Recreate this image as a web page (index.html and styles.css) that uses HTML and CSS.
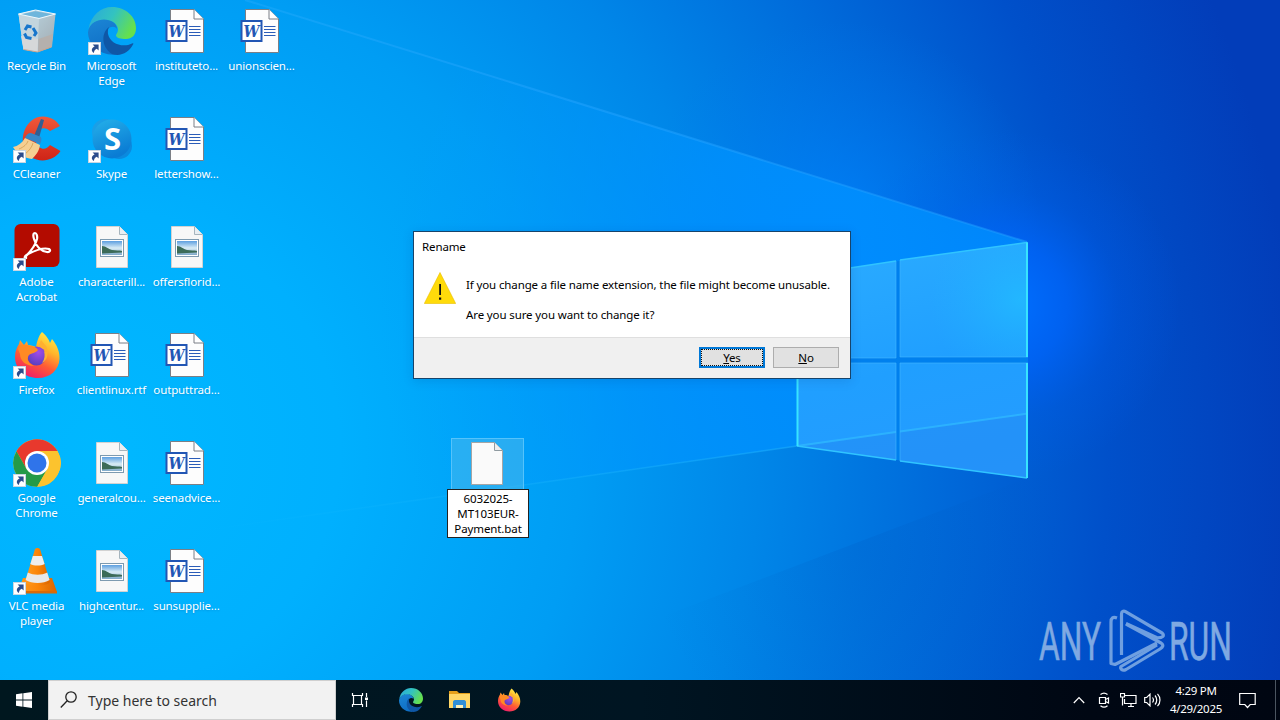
FILE: index.html
```html
<!DOCTYPE html>
<html lang="en">
<head>
    <meta charset="UTF-8">
    <meta name="viewport" content="width=device-width, initial-scale=1.0">
    <title>Desktop</title>
    <link rel="stylesheet" href="styles.css">
</head>

<body>
    <!-- shared icons -->
    <svg class="sprite" width="0" height="0">
        <defs>
            <linearGradient id="edgeA" x1="0" y1="0.1" x2="1" y2="0.5"><stop offset="0" stop-color="#2aa9dc"/><stop offset="0.5" stop-color="#33c3c0"/><stop offset="1" stop-color="#66e04c"/></linearGradient>
            <linearGradient id="edgeB" x1="0" y1="0" x2="0.3" y2="1"><stop offset="0" stop-color="#1c86d5"/><stop offset="1" stop-color="#0f6fc6"/></linearGradient>
            <linearGradient id="ffA" x1="0.8" y1="0" x2="0.3" y2="1"><stop offset="0" stop-color="#fff04a"/><stop offset="0.35" stop-color="#ffb52a"/><stop offset="0.65" stop-color="#ff5a35"/><stop offset="1" stop-color="#ee1b6c"/></linearGradient>
            <radialGradient id="ffB" cx="0.6" cy="0.3" r="0.7"><stop offset="0" stop-color="#a34be8"/><stop offset="1" stop-color="#5a3fc0"/></radialGradient>
            <linearGradient id="ccA" x1="0" y1="0" x2="0" y2="1"><stop offset="0" stop-color="#f0583a"/><stop offset="1" stop-color="#cf2417"/></linearGradient>
            <linearGradient id="binA" x1="0" y1="0" x2="1" y2="1"><stop offset="0" stop-color="#bcd9e6"/><stop offset="1" stop-color="#a2abb1"/></linearGradient>
            <linearGradient id="skyA" x1="0" y1="0" x2="0.4" y2="1"><stop offset="0" stop-color="#25b1ea"/><stop offset="1" stop-color="#0a7cd4"/></linearGradient>
            <linearGradient id="photoA" x1="0" y1="0" x2="0" y2="1"><stop offset="0" stop-color="#5d9fe0"/><stop offset="0.5" stop-color="#d9ecf5"/><stop offset="1" stop-color="#7fa9c9"/></linearGradient>
            <linearGradient id="vlcA" x1="0" y1="0" x2="1" y2="0"><stop offset="0" stop-color="#ff9b1f"/><stop offset="0.5" stop-color="#fb8508"/><stop offset="1" stop-color="#d96500"/></linearGradient>
        </defs>

        <symbol id="shortcut" viewBox="0 0 13 13">
            <rect x="0.5" y="0.5" width="12" height="12" fill="#fff" stroke="#c9d6e2"/>
            <path d="M4.600 2.500h6v6L8.800 6.700C6.700 7.800 6 9 5.900 11 2.600 9 3.600 5.800 6.600 4.500z" fill="#2b4c8c"/>
        </symbol>
        <symbol id="word" viewBox="0 0 48 48">
            <path d="M7.500 2.500h23.500l9.500 9.500v33.500h-33z" fill="#fdfdfd" stroke="#7b7f86"/>
            <path d="M31 2.500V12h9.500" fill="#fff" stroke="#7b7f86"/>
            <path d="M26 19.500h11.500M26 22.500h11.500M26 25.500h11.500M26 28.500h11.500" stroke="#2a5cb8"/>
            <rect x="3.500" y="14" width="20" height="20" fill="#fff" stroke="#2256b4" stroke-width="2"/>
            <text x="13.500" y="30" class="word-letter" textLength="16" lengthAdjust="spacingAndGlyphs">W</text>
        </symbol>
        <symbol id="photo" viewBox="0 0 48 48">
            <path d="M8.500 3.500h23l8 8v33h-31z" fill="#f7f7f7" stroke="#d2d2d2"/>
            <path d="M31.500 3.500v8h8" fill="#e9eef2" stroke="#a6b4bd"/>
            <rect x="12.500" y="16.500" width="23" height="17" fill="#fff" stroke="#7d9ab0"/>
            <rect x="14" y="18" width="20" height="14" fill="url(#photoA)"/>
            <path d="M14 23c4 0 6 3 10 4 4 .5 7 .3 10 1v1.500c-6 0-14 1-20 1z" fill="#3c6b58"/>
        </symbol>
        <symbol id="edge" viewBox="0 0 48 48">
            <path d="M0 25C1 17 8 12 16 12c8 0 13 5 13 10-2-3-6-3-9 0-6 6-3 20 8 25.500C12 49 0 38 0 25z" fill="url(#edgeB)"/>
            <path d="M21 20C14 25 12 39 24 47c9 3 17-2 21-9.500.8-1.300 0-1.600-1-1C35 41 22 37 20 27c-.3-3 0-5 1-7z" fill="#0f57a6"/>
            <path d="M.5 22C3 8 13 0 24 0c14 0 24 10 24 21 0 7-4 11-10 11-5 0-10-1-10-3.500 0-1.500 2-2.500 2-6.500-1-6-7-9.500-14-9.500-7 0-13 3.500-15.500 9.500z" fill="url(#edgeA)"/>
        </symbol>
        <symbol id="firefox" viewBox="0 0 48 48">
            <path d="M29 1c5 4 7 8 8 11l2-4c5 6 8 13 7.500 20C46 39 37 47 25 47 12 47 2 38 2 26c0-6 2-10 4-13l1-4 4 5 3-4 1 4c3 0 6 1 8 2 1-6 3-12 6-15z" fill="url(#ffA)"/>
            <circle cx="23.500" cy="25" r="9.500" fill="url(#ffB)"/>
            <path d="M5 18c2-5 7-5 12-3 4 0 7 2 8 4-2 3-6 3-9 5-3 4 0 9 5 11-8 0-14-5-14-12z" fill="#ff8a24"/>
            <path d="M25 16c3-1 7 1 9 5-1 0-2 0-3-1 1 4 1 8-2 12 6-3 7-11 4-17l-5-6z" fill="#ffb030"/>
        </symbol>
        <symbol id="chrome" viewBox="0 0 48 48">
            <circle cx="24" cy="24" r="23.700" fill="#fcc934"/>
            <path d="M24 24L13.600 30 3.500 12.200A23.700 23.700 0 0 1 44.500 12H24z" fill="#e8392d"/>
            <path d="M3.500 12.200L13.600 30 24 36l10.400-6L24.200 47.700A23.700 23.700 0 0 1 3.500 12.200z" fill="#249a48"/>
            <path d="M34.400 30L24.200 47.700A23.700 23.700 0 0 0 44.500 12H24z" fill="#fcc32e"/>
            <circle cx="24" cy="24" r="12" fill="#fff"/>
            <circle cx="24" cy="24" r="9.500" fill="#2f74ea"/>
        </symbol>
    </svg>

    <div class="desktop">
        <svg class="wallpaper" viewBox="0 0 1280 720" preserveAspectRatio="none">
            <defs>
                <radialGradient id="base" cx="100" cy="450" r="1200" gradientUnits="userSpaceOnUse">
                    <stop offset="0" stop-color="#00b8ff"/>
                    <stop offset="0.2" stop-color="#00b0fe"/>
                    <stop offset="0.4" stop-color="#009df4"/>
                    <stop offset="0.55" stop-color="#0086e8"/>
                    <stop offset="0.7" stop-color="#006ada"/>
                    <stop offset="0.84" stop-color="#0050ca"/>
                    <stop offset="1" stop-color="#023db9"/>
                </radialGradient>
                <radialGradient id="glow" cx="1005" cy="305" r="175" gradientUnits="userSpaceOnUse">
                    <stop offset="0" stop-color="#0070ff"/>
                    <stop offset="0.35" stop-color="#0066ff" stop-opacity="0.7"/>
                    <stop offset="0.65" stop-color="#0060f4" stop-opacity="0.25"/>
                    <stop offset="1" stop-color="#0060f0" stop-opacity="0"/>
                </radialGradient>
                <radialGradient id="beamGlow" cx="840" cy="310" r="460" gradientUnits="userSpaceOnUse">
                    <stop offset="0" stop-color="#008cff"/>
                    <stop offset="0.4" stop-color="#0092ff" stop-opacity="0.75"/>
                    <stop offset="1" stop-color="#009cff" stop-opacity="0"/>
                </radialGradient>
                <radialGradient id="upperGlow" cx="840" cy="220" r="200" gradientUnits="userSpaceOnUse">
                    <stop offset="0" stop-color="#0082ff" stop-opacity="0.7"/>
                    <stop offset="1" stop-color="#0078f0" stop-opacity="0"/>
                </radialGradient>
                <radialGradient id="lowShade" cx="860" cy="550" r="210" gradientUnits="userSpaceOnUse">
                    <stop offset="0" stop-color="#0050b8" stop-opacity="0.16"/>
                    <stop offset="1" stop-color="#0058b8" stop-opacity="0"/>
                </radialGradient>
                <linearGradient id="rayFade" x1="260" y1="0" x2="1027" y2="0" gradientUnits="userSpaceOnUse">
                    <stop offset="0" stop-color="#35b0ff" stop-opacity="0.3"/>
                    <stop offset="0.4" stop-color="#25a4ff" stop-opacity="0.5"/>
                    <stop offset="1" stop-color="#209cff" stop-opacity="0.5"/>
                </linearGradient>
                <linearGradient id="lowFade" x1="200" y1="0" x2="797" y2="0" gradientUnits="userSpaceOnUse">
                    <stop offset="0" stop-color="#20c0ff" stop-opacity="0"/>
                    <stop offset="1" stop-color="#20b4ff" stop-opacity="0.5"/>
                </linearGradient>
                <linearGradient id="pane" x1="900" y1="245" x2="960" y2="480" gradientUnits="userSpaceOnUse">
                    <stop offset="0" stop-color="#29aaff"/>
                    <stop offset="0.5" stop-color="#209fff"/>
                    <stop offset="1" stop-color="#259bff"/>
                </linearGradient>
                <radialGradient id="paneLight" cx="1020" cy="300" r="90" gradientUnits="userSpaceOnUse">
                    <stop offset="0" stop-color="#22c4ff" stop-opacity="0.6"/>
                    <stop offset="1" stop-color="#22b4ff" stop-opacity="0"/>
                </radialGradient>
            </defs>
            <rect width="1280" height="720" fill="url(#base)"/>
            <rect width="1280" height="720" fill="url(#upperGlow)"/>
            <rect width="1280" height="720" fill="url(#glow)"/>
            <path d="M245 0L1027 242v236L797 446 0 560V0z" fill="url(#beamGlow)"/>
            <path d="M1027 478L527 668v52h753V478z" fill="url(#lowShade)"/>
            <path d="M245 0L1027 242" stroke="url(#rayFade)" stroke-width="2"/>
            <path d="M200 531L797 446" stroke="url(#lowFade)" stroke-width="1.500"/>
            <path d="M797 276l231-34v236l-231-32z" fill="#0080ee"/>
            <g fill="url(#pane)">
                <path d="M797 276l99-15v97h-99zM900 260l128-18v115H900zM797 363h99v97l-99-14zM900 363h128v115l-128-17z"/>
            </g>
            <path d="M900 260l128-18v115H900z" fill="url(#paneLight)"/>
            <path d="M797 446l99-14v28zM900 431.500l128-18V478l-128-17z" fill="#2484f0" opacity="0.4"/>
            <path d="M797 446l99-14M900 431.500l128-18" stroke="#30bcff" stroke-opacity="0.7" stroke-width="2"/>
            <path d="M896 261v97h-99M900 357V260M900 357h128M797 363h99v97M900 461v-98h128" fill="none" stroke="#42b8ff" stroke-opacity="0.6"/>
            <path d="M797 276l99-15M900 260l127-17.500M797 446l99 14M900 461l127 17" fill="none" stroke="#30c4ff" stroke-width="1.500"/>
            <path d="M1027 242.500V357M1027 363v115M797.500 363v83" fill="none" stroke="#38e4ff" stroke-width="2"/>
        </svg>

        <div class="icons">
            <div class="icon">
                <svg viewBox="0 0 48 48">
                    <path d="M5.500 7l5 35.500 14 2.500 14.500-5 3.500-33-21-4z" fill="url(#binA)"/>
                    <path d="M5.500 7L26 12l-1.500 33-14-2.500z" fill="#c3d5de"/>
                    <path d="M7 7.500l15.500-3.200L41 7.400 26 11z" fill="#6fb6dc"/>
                    <path d="M9 35l-1-6 17 3-.5 13-14-2.500z" fill="#d6d8d9"/>
                    <path d="M25.500 32L40 27l-1.500 13L25 45z" fill="#b5b0ad"/>
                    <path d="M10.500 42.500L24.500 45l14-5" fill="none" stroke="#c9a48d"/>
                    <path d="M5.500 7l17-4 20 4L26 11.500z" fill="none" stroke="#eef9ff"/>
                    <g fill="none" stroke="#1776cc" stroke-width="3"><path d="M12 23l2.500-4 4 1M20 21l3 5-2 3M18.500 31.500l-5-1-2-4"/></g>
                </svg>
                <span>Recycle Bin</span>
            </div>
            <div class="icon">
                <svg viewBox="0 0 48 48">
                    <path d="M47 11C41 1 27-2 18 6 7 16 7 34 18 42c9 6 23 4 29.500-6L37 30c-3 4-7 5-11 2-5-5-5-13 0-17 4-3 8-2 11 1z" fill="url(#ccA)"/>
                    <path d="M28 4l3 1-5 18-5-2z" fill="#315f94"/>
                    <path d="M18 18l10 4c1 3 0 5-1 7L12 23c1-3 3-5 6-5z" fill="#3486c8"/>
                    <path d="M12 23l15 7c-1 7-5 11-8 14-7-1-15-5-19-12 5-1 9-4 12-9z" fill="#f5cf92"/>
                    <path d="M6 34c5-2 8-5 9-8M12 39c4-3 7-7 8-11" stroke="#dba75c" fill="none"/>
                    <use href="#shortcut" x="0" y="35" width="13" height="13"/>
                </svg>
                <span>CCleaner</span>
            </div>
            <div class="icon">
                <svg viewBox="0 0 48 48">
                    <rect x="1.500" y="1" width="45" height="43" rx="6" fill="#b30b00"/>
                    <path d="M13 33c4-4 9-9 11-17 .6-3-.5-6-2-6-2 0-2 3-1 6 2 7 7 12 13 13 3 .4 4-2 2-3-6-2-15 2-21 5-4 2-4 5-2 4z" fill="none" stroke="#fff" stroke-width="2.200"/>
                    <use href="#shortcut" x="0" y="35" width="13" height="13"/>
                </svg>
                <span>Adobe Acrobat</span>
            </div>
            <div class="icon">
                <svg viewBox="0 0 48 48"><use href="#firefox"/><use href="#shortcut" x="0" y="35" width="13" height="13"/></svg>
                <span>Firefox</span>
            </div>
            <div class="icon">
                <svg viewBox="0 0 48 48"><use href="#chrome"/><use href="#shortcut" x="0" y="35" width="13" height="13"/></svg>
                <span>Google Chrome</span>
            </div>
            <div class="icon">
                <svg viewBox="0 0 48 48">
                    <path d="M10 31h29l5 14H5z" fill="url(#vlcA)"/>
                    <path d="M5 44h39v2.500H5z" fill="#d96a08"/>
                    <path d="M22 2c1-1.500 4-1.500 5 0l10 33c-3 5-22 5-25 0z" fill="url(#vlcA)"/>
                    <path d="M19.800 9h9.200l2.600 8c-4 2-10.500 2-14.300 0z" fill="#eee"/>
                    <path d="M14.800 25.500c6 3 13.500 3 19.500 0l2.300 7.500c-6 4-18 4-24 0z" fill="#e8e8e8"/>
                    <use href="#shortcut" x="0" y="35" width="13" height="13"/>
                </svg>
                <span>VLC media player</span>
            </div>

            <div class="icon">
                <svg viewBox="0 0 48 48"><use href="#edge"/><use href="#shortcut" x="0" y="35" width="13" height="13"/></svg>
                <span>Microsoft Edge</span>
            </div>
            <div class="icon">
                <svg viewBox="0 0 48 48">
                    <circle cx="17" cy="17" r="13" fill="#1b9fe6"/>
                    <circle cx="31" cy="31" r="13" fill="#0b8ade"/>
                    <circle cx="24" cy="24" r="19.500" fill="url(#skyA)"/>
                    <text x="24.500" y="35" class="skype-letter">S</text>
                    <use href="#shortcut" x="0" y="35" width="13" height="13"/>
                </svg>
                <span>Skype</span>
            </div>
            <div class="icon"><svg><use href="#photo"/></svg><span>characterill...</span></div>
            <div class="icon"><svg><use href="#word"/></svg><span>clientlinux.rtf</span></div>
            <div class="icon"><svg><use href="#photo"/></svg><span>generalcou...</span></div>
            <div class="icon"><svg><use href="#photo"/></svg><span>highcentur...</span></div>

            <div class="icon"><svg><use href="#word"/></svg><span>instituteto...</span></div>
            <div class="icon"><svg><use href="#word"/></svg><span>lettershow...</span></div>
            <div class="icon"><svg><use href="#photo"/></svg><span>offersflorid...</span></div>
            <div class="icon"><svg><use href="#word"/></svg><span>outputtrad...</span></div>
            <div class="icon"><svg><use href="#word"/></svg><span>seenadvice...</span></div>
            <div class="icon"><svg><use href="#word"/></svg><span>sunsupplie...</span></div>

            <div class="icon"><svg><use href="#word"/></svg><span>unionscien...</span></div>
        </div>

        <div class="renaming">
            <div class="selected">
                <svg width="34" height="44" viewBox="0 0 34 44">
                    <path d="M1.500.500h23l8 8v34h-31z" fill="#fafafa" stroke="#a5a5a5"/>
                    <path d="M24.500.500v8h8" fill="#eee" stroke="#8f9aa0"/>
                </svg>
            </div>
            <div class="edit">6032025-<br>MT103EUR-<br>Payment.bat</div>
        </div>

        <div class="dialog">
            <div class="dialog-title">Rename</div>
            <div class="dialog-body">
                <svg width="32" height="32" viewBox="0 0 32 32">
                    <path d="M16 .5L31.700 31.500H.3z" fill="#ffdb0a" stroke="#e9bd00" stroke-width="0.600"/>
                    <path d="M15.200 12h1.800v11h-1.800zM15 25.500h2.200v2.300H15z" fill="#111"/>
                </svg>
                <div class="dialog-text">
                    <p>If you change a file name extension, the file might become unusable.</p>
                    <p>Are you sure you want to change it?</p>
                </div>
            </div>
            <div class="dialog-footer">
                <button class="btn focused"><u>Y</u>es</button>
                <button class="btn"><u>N</u>o</button>
            </div>
        </div>

        <svg class="watermark" width="220" height="70" viewBox="0 0 220 70">
            <text x="4" y="52" textLength="62" lengthAdjust="spacingAndGlyphs">ANY</text>
            <text x="134" y="52" textLength="63" lengthAdjust="spacingAndGlyphs">RUN</text>
            <g fill="none" stroke-width="3.200" stroke-linejoin="round">
                <path d="M82 10c-4-1.500-6 0-6 4v41.500l4 1L122 35"/>
                <path d="M86.500 47V6c0-2.500 2-3.500 4-2.300L127 25c3 2.500 1 5-5 4.800L91 15.500"/>
                <path d="M91 16l35 19c3 2 2 4-1 6L91 61.500c-4 2-6-1-5-3L122 37"/>
            </g>
        </svg>
    </div>

    <div class="taskbar">
        <div class="start">
            <svg width="16" height="16" viewBox="0 0 16 16" fill="#fff"><path d="M0 2.200l6.500-.9v6.300H0zM7.300 1.200L16 0v7.600H7.300zM0 8.400h6.500v6.300L0 13.800zM7.300 8.400H16V16l-8.700-1.200z"/></svg>
        </div>
        <div class="search">
            <svg width="18" height="18" viewBox="0 0 18 18" fill="none" stroke="#222" stroke-width="1.300"><circle cx="11" cy="6" r="5.200"/><path d="M7.200 9.800L.8 16.500"/></svg>
            <span>Type here to search</span>
        </div>
        <div class="pinned">
            <svg width="18" height="18" viewBox="0 0 18 18" fill="none" stroke="#fff" stroke-width="1.200"><path d="M1.500 2v2.500h10V2M1.500 16v-2.500h10V16M2.500 4.500v9M10.500 4.500v9M15.500 2v4M15.500 9.500V16"/><path d="M14 6.500h3v2.500h-3z" fill="#fff" stroke="none"/></svg>
            <svg width="24" height="24"><use href="#edge"/></svg>
            <svg width="22" height="20" viewBox="0 0 22 20"><path d="M0 1h8l2 2h11v4H0z" fill="#e5a01b"/><path d="M0 4h21v14H0z" fill="#ffd767"/><path d="M4 18v-6c0-1 .7-2 2-2h9c1.300 0 2 1 2 2v6h-3v-3H7v3z" fill="#318fd6"/><path d="M7 15h7v3H7z" fill="#fff0b5"/></svg>
            <svg width="24" height="24"><use href="#firefox"/></svg>
        </div>
        <div class="tray">
            <svg class="chevron" width="12" height="8" viewBox="0 0 12 8"><path d="M.8 7L6 1.500 11.200 7"/></svg>
            <svg class="cam" width="12" height="16" viewBox="0 0 12 16"><path d="M1.500 5.500h6v6h-6zM7.500 7.500l3-1.500v5l-3-1.500M2.500 2.500c2-1.700 5-1.700 7 0M2.500 13.800c2 1.600 5 1.600 7 0"/></svg>
            <svg class="net" width="17" height="15" viewBox="0 0 17 15"><path d="M5 2.500h11v8H4.500V6M8 13.500h6M11 10.500v3M.5.500h4v3.500h-4zM2.500 4v8.500"/></svg>
            <svg class="sound" width="18" height="14" viewBox="0 0 18 14"><path d="M.7 4.500h2L6 1.200v11.600L2.700 9.500h-2zM8.500 4.500c1.200 1.500 1.200 3.500 0 5M11 2.500c2.300 2.500 2.300 6.500 0 9M13.500.8c3.300 3.500 3.300 9 0 12.400"/></svg>
            <div class="clock">4:29 PM<br>4/29/2025</div>
            <svg class="notify" width="17" height="17" viewBox="0 0 17 17"><path d="M.7 1.500h15.500v11h-5L8.500 15.500l-2.700-3H.7z"/></svg>
            <div class="peek"></div>
        </div>
    </div>
</body>

</html>
```
FILE: styles.css
```css
html, body {
    height: 100%;
}
body {
    margin: 0;
    display: flex;
    flex-direction: column;
    overflow: hidden;
    font-family: "Noto Sans", "Open Sans", sans-serif;
    font-size: 12px;
    background-color: #00a8ff;
}
.sprite {
    position: absolute;
}
.desktop {
    position: relative;
    flex: 1;
    overflow: hidden;
}
.wallpaper {
    position: absolute;
    top: 0;
    left: 0;
    width: 1280px;
    height: 720px;
}

/* desktop icons */
.icons {
    position: relative;
    display: grid;
    grid-auto-flow: column;
    grid-template-rows: repeat(6, 108px);
    grid-auto-columns: 74px;
    column-gap: 1px;
    padding-top: 7px;
}
.icon {
    display: flex;
    flex-direction: column;
    align-items: center;
    gap: 3px;
    color: #fff;
    text-align: center;
    font-size: 11.5px;
    letter-spacing: -.13px;
    line-height: 15px;
    text-shadow: 0 1px 2px rgba(0, 40, 90, .2);
}
.icon svg {
    width: 48px;
    height: 48px;
    flex-shrink: 0;
}
.icon span {
    margin-left: -1px;
}
.word-letter {
    font: italic bold 17px "DejaVu Serif", serif;
    letter-spacing: 0;
    fill: #2256b4;
    text-anchor: middle;
    text-shadow: none;
}
.skype-letter {
    font: bold 31px "Open Sans", sans-serif;
    letter-spacing: 0;
    fill: #fff;
    text-anchor: middle;
    text-shadow: none;
}

.renaming {
    position: absolute;
    left: 447px;
    top: 438px;
    width: 82px;
    display: flex;
    flex-direction: column;
    align-items: center;
}
.selected {
    box-sizing: border-box;
    width: 73px;
    height: 51px;
    margin-right: 2px;
    padding-top: 3px;
    text-align: center;
    background-color: rgba(80, 185, 235, .5);
    border: 1px solid #55c3fb;
    border-bottom: 0;
}
.edit {
    box-sizing: border-box;
    width: 82px;
    height: 49px;
    padding-top: 1px;
    background-color: #fff;
    border: 1px solid #222;
    color: #000;
    font-size: 11.5px;
    letter-spacing: -.1px;
    line-height: 15px;
    text-align: center;
}

/* dialog */
.dialog {
    position: absolute;
    left: 413px;
    top: 231px;
    width: 436px;
    height: 146px;
    display: flex;
    flex-direction: column;
    background-color: #fff;
    border: 1px solid #17446b;
    box-shadow: 0 2px 10px rgba(0, 40, 110, .15);
    color: #000;
    letter-spacing: -.12px;
}
.dialog-title {
    padding: 7px 8px 0;
    font-size: 11.5px;
    line-height: 16px;
}
.dialog-body {
    display: flex;
    flex: 1;
    padding: 17px 10px 0;
    gap: 10px;
}
.dialog-text {
    padding-top: 5px;
}
.dialog-text p {
    margin: 0 0 15px;
    line-height: 15px;
    white-space: nowrap;
    font-size: 11.5px;
}
.dialog-footer {
    box-sizing: border-box;
    display: flex;
    justify-content: flex-end;
    gap: 8px;
    height: 41px;
    padding: 9px 11px 0;
    background-color: #f0f0f0;
    border-top: 1px solid #dfdfdf;
}
.btn {
    width: 66px;
    height: 21px;
    padding: 0;
    border: 1px solid #adadad;
    background-color: #e1e1e1;
    color: #000;
    font-family: inherit;
    font-size: 11.5px;
    letter-spacing: -.2px;
    line-height: 17px;
}
.btn.focused {
    border: 2px solid #0078d7;
    outline: 1px dotted #111;
    outline-offset: -3px;
}

.watermark {
    position: absolute;
    left: 1035px;
    top: 608px;
    overflow: visible;
    fill: #7fa9e2;
    stroke: #7fa9e2;
    stroke-width: .6px;
    font: 53px "Roboto", sans-serif;
}
.watermark g {
    stroke: #6f9fe0;
}

/* taskbar */
.taskbar {
    position: relative;
    display: flex;
    height: 40px;
    background: linear-gradient(90deg, #00171f, #001522 50%, #000713 85%, #000612);
    color: #fff;
}
.start {
    display: flex;
    align-items: center;
    justify-content: center;
    width: 48px;
}
.search {
    box-sizing: border-box;
    display: flex;
    align-items: center;
    gap: 10px;
    width: 288px;
    padding-left: 11px;
    background-color: #f2f2f2;
    border: 1px solid #cfcfcf;
    color: #333;
    font-size: 14px;
}
.pinned {
    display: flex;
    align-items: center;
    padding-left: 15px;
}
.pinned svg:nth-child(2) {
    margin-left: 30px;
}
.pinned svg:nth-child(3) {
    margin-left: 26px;
}
.pinned svg:nth-child(4) {
    margin-left: 26px;
}
.tray {
    display: flex;
    align-items: center;
    margin-left: auto;
}
.tray svg {
    fill: none;
    stroke: #fff;
    stroke-width: 1.2;
}
.cam {
    margin-left: 13px;
}
.net {
    margin-left: 10px;
}
.sound {
    margin-left: 7px;
}
.clock {
    width: 70px;
    margin-left: -1px;
    text-align: center;
    font-size: 11.5px;
    line-height: 18px;
    letter-spacing: -.3px;
}
.notify {
    margin-left: 8px;
}
.peek {
    width: 4px;
    height: 40px;
    margin-left: 19px;
    border-left: 1px solid #4b5560;
}
```
